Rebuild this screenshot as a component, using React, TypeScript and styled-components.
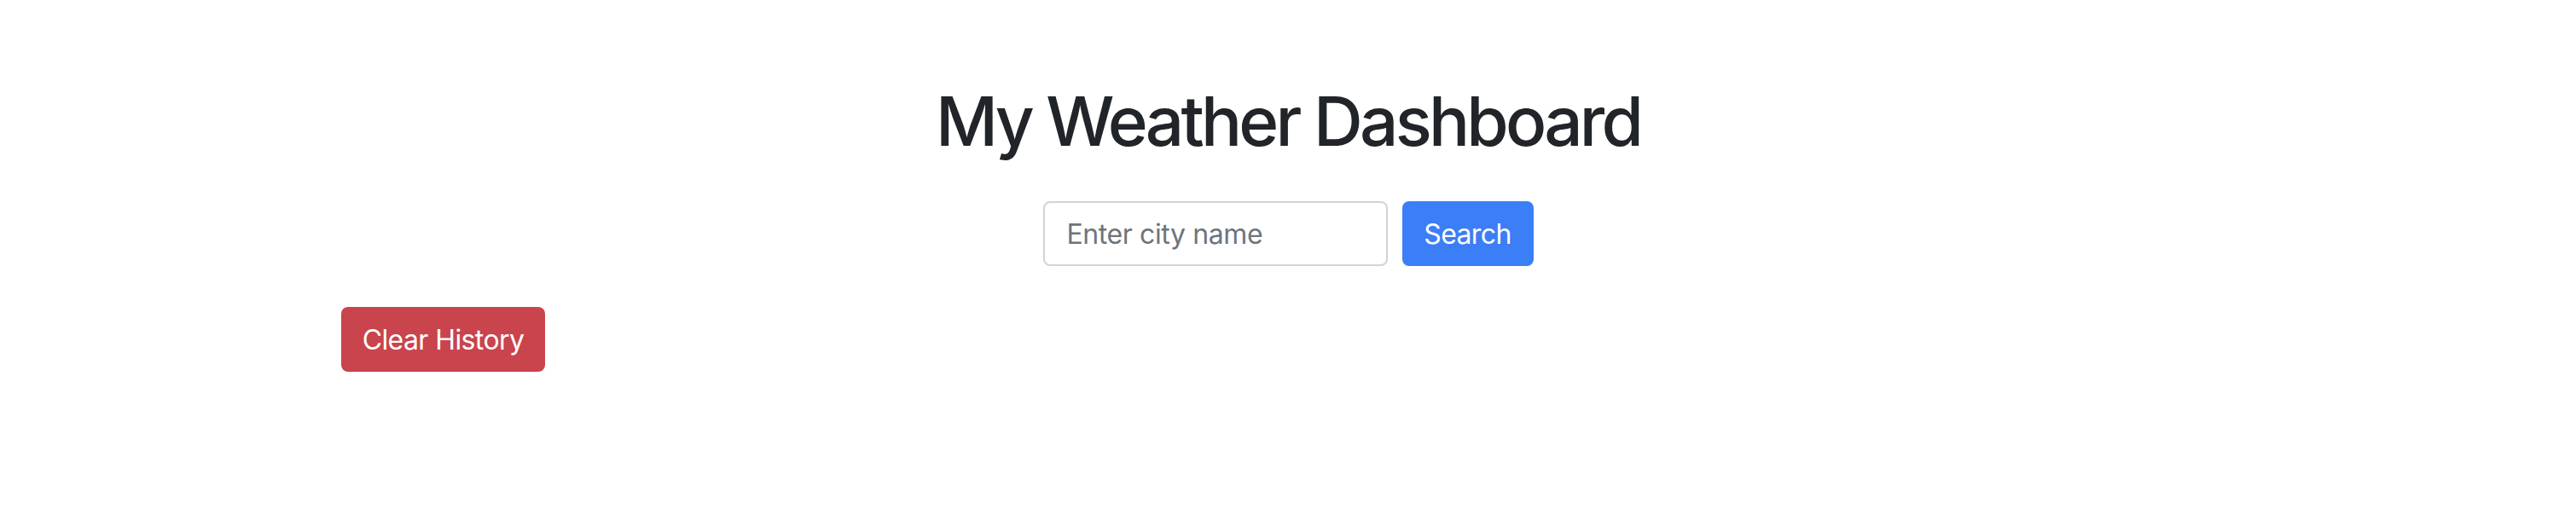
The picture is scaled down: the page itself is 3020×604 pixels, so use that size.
import React from "react";
import styled, { createGlobalStyle } from "styled-components";

const GlobalStyle = createGlobalStyle`
  html, body {
    margin: 0;
    padding: 0;
    background: #ffffff;
  }
  body {
    font-family: Inter, "Noto Sans", "Liberation Sans", sans-serif;
    color: #212529;
    font-size: 32px;
  }
  * { box-sizing: border-box; }
`;

const Page = styled.div`
  width: 3020px;
  height: 604px;
  background: #ffffff;
`;

const Container = styled.div`
  max-width: 2280px;
  margin: 0 auto;
  padding: 94px 30px 0;
`;

const Title = styled.h1`
  margin: 0;
  font-size: 80px;
  line-height: 96px;
  font-weight: 500;
  text-align: center;
  color: #212529;
  letter-spacing: -3.8px;
`;

const SearchForm = styled.form`
  display: flex;
  justify-content: center;
  align-items: center;
  gap: 17px;
  margin-top: 46px;
`;

const CityInput = styled.input`
  width: 404px;
  height: 76px;
  padding: 0 26px;
  border: 2px solid #ced4da;
  border-radius: 8px;
  font-family: inherit;
  font-size: 32px;
  letter-spacing: -0.4px;
  color: #495057;
  background: #fff;
  outline: none;
  &::placeholder {
    color: #6c757d;
  }
`;

const Button = styled.button<{ $tone: "primary" | "danger"; $w: number }>`
  display: inline-flex;
  align-items: center;
  justify-content: center;
  width: ${(p) => p.$w}px;
  height: 76px;
  padding: 0;
  border: none;
  border-radius: 8px;
  font-family: inherit;
  font-size: 32px;
  font-weight: 400;
  letter-spacing: -0.6px;
  color: #ffffff;
  background: ${(p) => (p.$tone === "primary" ? "#3b7ef6" : "#c9444c")};
  cursor: pointer;
`;

const HistoryBar = styled.div`
  display: flex;
  margin-top: 48px;
`;

export default function App() {
  return (
    <Page>
      <GlobalStyle />
      <Container>
        <Title>My Weather Dashboard</Title>
        <SearchForm onSubmit={(e) => e.preventDefault()}>
          <CityInput type="text" placeholder="Enter city name" />
          <Button type="submit" $tone="primary" $w={154}>
            Search
          </Button>
        </SearchForm>
        <HistoryBar>
          <Button type="button" $tone="danger" $w={239}>
            Clear History
          </Button>
        </HistoryBar>
      </Container>
    </Page>
  );
}
